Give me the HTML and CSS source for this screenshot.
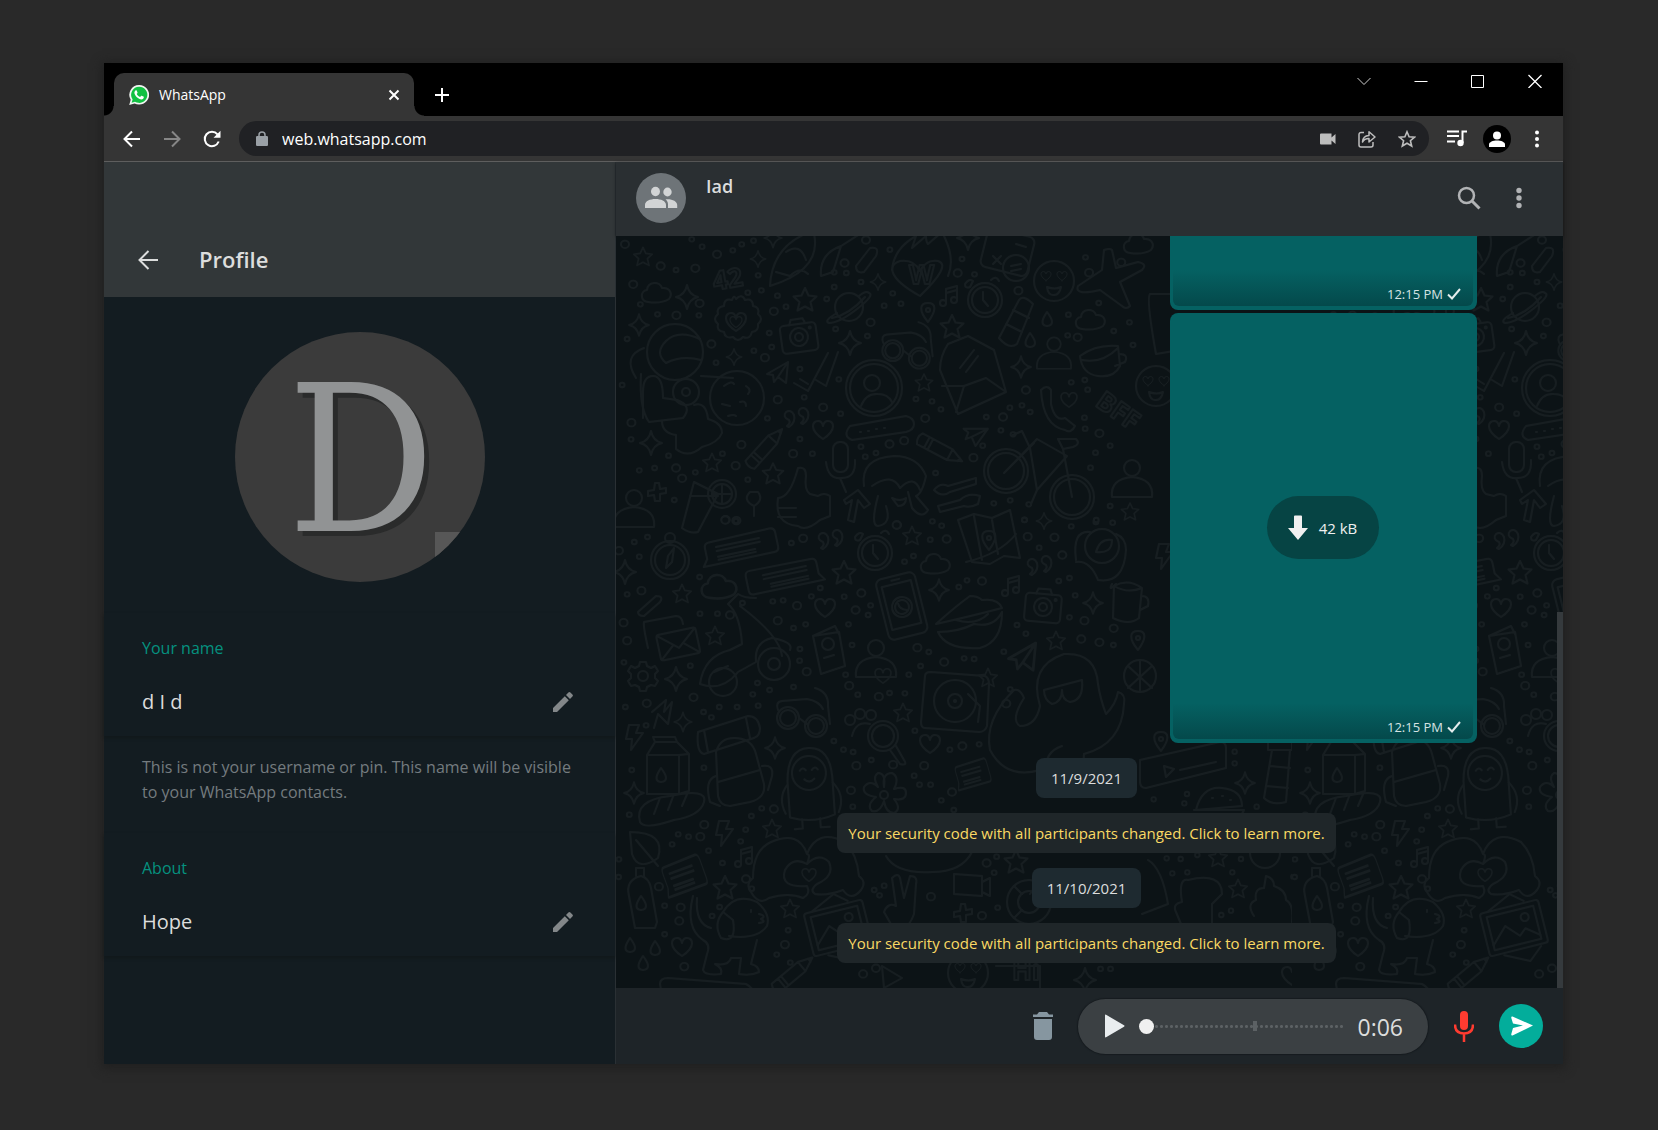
FILE: index.html
```html
<!DOCTYPE html>
<html lang="en">
<head>
<meta charset="utf-8">
<meta name="viewport" content="width=device-width, initial-scale=1">
<title>WhatsApp</title>
<link rel="stylesheet" href="styles.css">
</head>
<body>
<div class="window">
  <header class="tabstrip">
    <div class="tab">
      <svg class="tab-logo" width="20" height="20" viewBox="0 0 20 20"><path d="M10.2 0a9.8 9.8 0 1 1-4.6 18.400L.2 20l1.500-5.200A9.800 9.800 0 0 1 10.200 0z" fill="#f1f5f2"/><path d="M10.200 1.700a8.100 8.100 0 1 1-4.200 15l-3.400 1 1-3.300A8.100 8.100 0 0 1 10.200 1.700z" fill="#12c143"/><path d="M7 5.300c.4 0 .6 0 .8.500l.7 1.700c.1.300 0 .5-.2.700l-.6.800c.8 1.500 1.800 2.400 3.400 3.100l.9-1.100c.2-.2.400-.3.700-.2l1.700.8c.4.200.5.400.4.900-.2 1.300-1.300 1.900-2.400 1.900-2.800-.1-6.800-3.400-7-6.600 0-1 .7-2.400 1.600-2.500z" fill="#fff"/></svg>
      <span class="tab-title">WhatsApp</span>
      <button class="bare" aria-label="Close tab"><svg width="12" height="12" viewBox="0 0 12 12" stroke="#fff" stroke-width="2"><path d="M1.500 1.500l9 9M10.500 1.500l-9 9"/></svg></button>
    </div>
    <button class="bare new-tab" aria-label="New tab"><svg width="16" height="16" viewBox="0 0 16 16" stroke="#fff" stroke-width="2"><path d="M8 1v14M1 8h14"/></svg></button>
    <div class="window-controls">
      <button class="bare" aria-label="Search tabs"><svg width="14" height="14" viewBox="0 0 14 14" fill="none" stroke="#ccc"><path d="M.5 4l6.500 6.500L13.500 4"/></svg></button>
      <button class="bare" aria-label="Minimize"><svg width="14" height="14" viewBox="0 0 14 14" stroke="#fff"><path d="M.5 7.500h13"/></svg></button>
      <button class="bare" aria-label="Maximize"><svg width="14" height="14" viewBox="0 0 14 14" fill="none" stroke="#fff"><path d="M.5 1.500h12v12H.5z"/></svg></button>
      <button class="bare" aria-label="Close"><svg width="14" height="14" viewBox="0 0 14 14" stroke="#fff" stroke-width="1.300"><path d="M.5 1l13 13M13.500 1l-13 13"/></svg></button>
    </div>
  </header>

  <nav class="toolbar">
    <button class="bare" aria-label="Back"><svg width="18" height="18" viewBox="0 0 18 18" fill="none" stroke="#fff" stroke-width="2"><path d="M17 9H2M9 1.500L1.500 9 9 16.500"/></svg></button>
    <button class="bare" aria-label="Forward"><svg width="18" height="18" viewBox="0 0 18 18" fill="none" stroke="#868686" stroke-width="2"><path d="M1 9h15M9 1.500L16.500 9 9 16.500"/></svg></button>
    <button class="bare" aria-label="Reload"><svg width="18" height="18" viewBox="0 0 18 18"><path d="M15.700 11.500A7.200 7.200 0 1 1 14.500 4.300" fill="none" stroke="#fff" stroke-width="2"/><path d="M17.500.8v7h-7z" fill="#fff"/></svg></button>
    <div class="omnibox">
      <svg width="12" height="15" viewBox="0 0 12 15"><path d="M1.500 5h9A1.300 1.300 0 0 1 12 6.300v7a1.300 1.300 0 0 1-1.500 1.700h-9A1.300 1.300 0 0 1 0 13.300v-7A1.300 1.300 0 0 1 1.500 5z" fill="#9aa0a6"/><path d="M3 6V4a3 3 0 0 1 6 0v2" fill="none" stroke="#9aa0a6" stroke-width="1.500"/></svg>
      <input type="text" value="web.whatsapp.com" aria-label="Address">
      <button class="bare" aria-label="Camera"><svg width="16" height="12" viewBox="0 0 16 12" fill="#bdbdbd"><path d="M1 .5h10.500v4L15.500 1v10l-4-3.500v4H1a1 1 0 0 1-1-1v-9a1 1 0 0 1 1-1z"/></svg></button>
      <button class="bare" aria-label="Share"><svg width="18" height="18" viewBox="0 0 18 18" fill="none" stroke="#bdbdbd" stroke-width="1.500"><path d="M6 2.500H3A2 2 0 0 0 1 4.500V15a2 2 0 0 0 2 2h10a2 2 0 0 0 2-2v-3M4.500 12c.3-4.500 3-6.500 6.500-6.600V1.800L17 7l-6 5V8.600C8.200 8.500 6 9.500 4.500 12z" stroke-linejoin="round"/></svg></button>
      <button class="bare" aria-label="Bookmark"><svg width="18" height="18" viewBox="0 0 18 18" fill="none" stroke="#bdbdbd" stroke-width="1.600"><path d="M9 1.800l2.100 5 5.400.4-4.100 3.500 1.300 5.300L9 13.200 4.300 16l1.300-5.300L1.500 7.200l5.400-.4z"/></svg></button>
    </div>
    <button class="bare media" aria-label="Media controls"><svg width="20" height="17" viewBox="0 0 20 17"><path d="M0 1.500h12M0 6h12M0 11.500h8" stroke="#fff" stroke-width="2"/><path d="M15.500 13V1.500H20" fill="none" stroke="#fff" stroke-width="2"/><circle cx="13.500" cy="13" r="3.200" fill="#fff"/></svg></button>
    <button class="bare user" aria-label="You"><svg width="28" height="28" viewBox="0 0 28 28"><circle cx="14" cy="14" r="14"/><circle cx="14" cy="10.500" r="4" fill="#fff"/><path d="M6 22v-2.500c0-2.500 4-4 8-4s8 1.500 8 4V22z" fill="#fff"/></svg></button>
    <button class="bare menu" aria-label="Menu"><svg width="4" height="18" viewBox="0 0 4 18" fill="#fff"><circle cx="2" cy="2.500" r="2"/><circle cx="2" cy="9" r="2"/><circle cx="2" cy="15.500" r="2"/></svg></button>
  </nav>

  <div class="app">
    <aside class="profile">
      <header class="profile-head">
        <button class="bare" aria-label="Back to chats"><svg width="20" height="20" viewBox="0 0 20 20" fill="none" stroke="#dcdddd" stroke-width="2"><path d="M20 10H1.500M10.500 1L1.500 10l9 9"/></svg></button>
        <h1>Profile</h1>
      </header>
      <div class="photo"><span>D</span></div>
      <section class="field">
        <h2>Your name</h2>
        <div class="field-row"><span class="value">d I d</span><button class="bare" aria-label="Edit name"><svg width="20" height="20" viewBox="0 0 20 20" fill="#838789"><path d="M0 16L11.800 4.200l4 4L4 20H0zM13 3l2.400-2.400q1-1 2 0l2 2q1 1 0 2L17 7z"/></svg></button></div>
      </section>
      <p class="note">This is not your username or pin. This name will be visible to your WhatsApp contacts.</p>
      <section class="field">
        <h2>About</h2>
        <div class="field-row"><span class="value">Hope</span><button class="bare" aria-label="Edit about"><svg width="20" height="20" viewBox="0 0 20 20" fill="#838789"><path d="M0 16L11.800 4.200l4 4L4 20H0zM13 3l2.400-2.400q1-1 2 0l2 2q1 1 0 2L17 7z"/></svg></button></div>
      </section>
    </aside>

    <main class="chat">
      <header class="chat-head">
        <svg width="50" height="50" viewBox="0 0 50 50"><circle cx="25" cy="25" r="25" fill="#6e7478"/><g fill="#d2d4d5"><ellipse cx="19.500" cy="18.500" rx="4.500" ry="4.700"/><ellipse cx="31.500" cy="19" rx="4.200" ry="4.400"/><path d="M9 35v-3c0-4 5-6 10.500-6S30 28 30 32v3zM32 35v-3.500c0-2.300-1-4-2.500-5.200 6-.8 11.700 1.700 11.700 5.700v3z"/></g></svg>
        <h2>Iad</h2>
        <button class="bare" aria-label="Search"><svg width="24" height="24" viewBox="0 0 24 24" fill="none" stroke="#b1b3b5"><circle cx="9.500" cy="9.500" r="7.500" stroke-width="2.500"/><path d="M15 15l7.500 7.500" stroke-width="3"/></svg></button>
        <button class="bare" aria-label="Chat menu"><svg width="6" height="22" viewBox="0 0 6 22" fill="#b1b3b5"><circle cx="3" cy="3.500" r="2.700"/><circle cx="3" cy="11" r="2.700"/><circle cx="3" cy="18.500" r="2.700"/></svg></button>
      </header>

      <div class="messages">
        <svg class="doodles" width="100%" height="100%" aria-hidden="true">
          <defs>
            <path id="star" d="M0-12l3.500 7.500 8 1-6 5.500 2 8.500L0 6.500l-7.500 4 2-8.500-6-5.500 8-1z"/>
            <path id="spark" d="M0-12q2 10 11 12q-9 2-11 12q-2-10-11-12q9-2 11-12z"/>
            <path id="heart" d="M0 9C-14 0-11-9-5-9q4 0 5 5q1-5 5-5C11-9 14 0 0 9z"/>
            <path id="cloud" d="M-10 9c-8-1-8-11-1-12c1-9 13-9 15-2c8-1 11 6 7 11q-8 5-21 3z"/>
            <path id="drop" d="M0-7q10 13 0 14q-9-1 0-14z"/>
            <path id="pin" d="M0 10C-10-2-8-9 0-9S9-2 0 10zM-2-2a2 2 0 1 0 4 0a2 2 0 1 0-4 0"/>
            <path id="note" d="M-4 7V-7L7-10V4M-4 7a3 3 0 1 1-3-3l3 1M7 4a3 3 0 1 1-3-3l3 1M-4-3L7-6"/>
            <path id="quotes" d="M-8 9q7-5 5-12q-3-6-8-3q-4 5 3 8q2 3-2 6zM6 6q7-5 5-12Q8-12 3-9q-4 5 3 8q2 3-2 6z"/>
            <path id="plus" d="M-2-9h4l1 6 6-1v5l-6 1v7h-5l-1-6-6 1v-5l6-1z"/>
            <path id="bolt" d="M-5-12H5L2-4h7L-3 13l1-11h-6z"/>
            <path id="plane" d="M-12 2L9-10 7 11-1 5l-4 5-1-7zM-1 5L9-10"/>
            <g id="clock"><circle r="17"/><circle r="13"/><path d="M-2-8v8l5 6M-15-13q-5 2-5-3q4-6 8-3zM6-20q5-5 8 1"/></g>
            <g id="camera"><rect x="-18" y="-13" width="36" height="28" rx="4"/><circle r="9"/><circle r="4"/><path d="M-8-13l2-5H6l2 5"/><circle cx="12" cy="-8" r="1"/></g>
            <g id="planet"><circle r="14"/><path d="M-12 6q-14 8-8 10q10 0 28-14T20-14q-3-3-10 3M-17 11Q0 8 16-10"/></g>
            <g id="pencil"><path d="M-24-6H10L24 0 10 6h-34q-4-6 0-12zM-16-6V6M-12-6V6M10-6V6M20-2v4"/></g>
            <g id="person"><circle cy="-14" r="8"/><path d="M-20 15q-2-18 20-20q22 2 20 20z"/></g>
            <g id="loveface"><circle r="20"/><use href="#heart" transform="translate(-8 -5) scale(.5)"/><use href="#heart" transform="translate(8 -5) scale(.5)"/><path d="M-7 6q8 3 14 0q-2 9-8 8q-5 0-6-8z"/></g>
            <g id="shades"><circle cx="-15" cy="8" r="11"/><circle cx="13" cy="16" r="11"/><circle cx="-15" cy="8" r="8"/><circle cx="13" cy="16" r="8"/><path d="M-25 0q-3-8 4-9l25-2q12 2 16 10M12-22q14 4 13 18l2 18M-4 8l8 6"/></g>
            <g id="speech"><path d="M-30-9q-5 0-5 5V7l-5 7h10H32q5 0 5-5V-5q0-5-5-5zM-24-3h44M-24 1h44M-24 7h38M-24 10h38"/></g>
            <g id="phone"><rect x="-20" y="-32" width="40" height="62" rx="6"/><rect x="-15" y="-24" width="30" height="44"/><circle r="10"/><circle r="7"/><path d="M-3-4q0 6 7 8M-4-28h8"/></g>
            <g id="milk"><path d="M-20-12l8-13h22l12 12v37l-10 3h-32zM-20-12h32L22-13M12-12v39M-12-25l-2-5h22l2 5"/><use href="#drop" x="-6" y="8"/></g>
            <g id="letter"><rect x="-20" y="-12" width="40" height="26" rx="3"/><path d="M-19-11L0 5l19-16M-19 13L-5 1M19 13L5 1"/></g>
            <g id="kid"><path d="M-22 28V-8q2-32 23-32t22 30v38q-22 8-45 0z"/><circle cy="-15" r="17"/><path d="M-9-18q3-4 6 0M3-18q3-4 6 0M-5-9q5 5 10 0M-23-4q-10 12-3 28M23-4q12 14 4 30M-10 31v9h-8M8 31v9h9"/></g>
            <g id="hands"><path d="M0-14Q-8-38-36-26Q-54-18-54 10Q-62 16-56 24Q-48 38-38 30Q-18 24-4 30Q4 26 0 18Q-28 20-22 2Q-14-12 0-4Q4-14 0-14Q10-40 38-26Q50-14 52 8Q60 14 54 22Q44 34 36 22Q20 28 8 26Q2 22 10 16Q28 8 22-6Q12-16 0-4"/><use href="#heart" transform="translate(2 7) scale(.7)"/></g>
            <g id="bike"><circle cx="-33" cy="14" r="22"/><circle cx="-33" cy="14" r="18"/><circle cx="33" cy="40" r="22"/><circle cx="33" cy="40" r="18"/><path d="M-33 14L-2-18l30 17-30 34-7-42-8-17-9 4M33 40L24-8l-5-10h18q5 5-3 8l-10 2M-2 33l-6 14M-35 16L-5-14"/></g>
            <g id="dog"><path d="M-38-34q-8 32 10 44q8 4 4 14l-4 16q2 6 18 4q2-6-6-10q14 2 16-6h10l-2 16q12 2 20-2q0-6-8-8l6-24"/><path d="M-34-32q-2 26 14 30M-8-18q12-20 34-10q14 12 10 24q-10 14-38 10M-8-18q-10 12-2 26q16 6 12-18zM20-20v2M28-16q8 2 2 5q6 3-2 4"/></g>
            <g id="pictures"><rect x="-30" y="-22" width="60" height="44" rx="3"/><rect x="-24" y="-17" width="48" height="34"/><path d="M-24 12L-8-4 4 9l7-6 13 10M-22-22L4-34 16-24M-16 24L8 36 22 24"/><circle cx="13" cy="-8" r="4"/></g>
          </defs>
          <pattern id="wall" width="676" height="760" patternUnits="userSpaceOnUse">
            <rect width="676" height="760" fill="#0c1316"/>
            <g class="ring" transform="translate(-16 -86) scale(.357 .3333)">
              <path id="r1" d="M70 283h0M328 313h0M170 348h0M267 355h0M93 403h0M214 496h0M279 460h0M487 484h0M745 270h0M685 339h0M1002 369h0M1370 368h0M1460 337h0M758 517h0M312 582h0M462 623h0M88 818h0M498 749h0M625 772h0M396 884h0M541 911h0M811 882h0M852 872h0M911 805h0M1193 720h0M1129 801h0M1046 923h0M1399 850h0M213 954h0M230 985h0M380 947h0M352 1109h0M382 1112h0M832 1125h0M1172 422h0M1338 562h0"/>
              <use class="hole" href="#r1"/>
            </g>
            <g class="ring small" transform="translate(-16 -86) scale(.357 .3333)">
              <path id="r2" d="M257 268h0M286 290h0M372 301h0M397 283h0M430 272h0M213 360h0M113 463h0M161 493h0M277 496h0M443 376h0M452 421h0M497 437h0M521 470h0M414 428h0M812 299h0M656 367h0M690 369h0M731 396h0M656 411h0M635 447h0M796 467h0M843 461h0M820 430h0M1014 327h0M1049 373h0M1360 322h0M1397 459h0M1312 494h0M1310 556h0M1439 543h0M1483 517h0M1493 585h0M660 537h0M749 558h0M474 549h0M481 591h0M431 602h0M325 638h0M76 567h0M62 705h0M87 868h0M560 657h0M669 688h0M572 742h0M674 791h0M469 805h0M560 867h0M595 911h0M731 890h0M743 920h0M773 909h0M885 747h0M930 754h0M955 778h0M1148 773h0M1182 766h0M1205 786h0M1082 801h0M1123 841h0M1157 853h0M1072 887h0M940 969h0M1320 697h0M1358 690h0M1366 719h0M1357 803h0M1359 836h0M1429 887h0M1388 908h0M1374 953h0M110 961h0M153 954h0M192 917h0M267 967h0M343 911h0M414 989h0M208 1050h0M1103 1060h0M1149 1051h0M1201 1063h0M1189 1109h0M1389 1116h0M1429 1068h0"/>
              <use class="hole" href="#r2"/>
            </g>
            <g class="ring" transform="translate(-6 264) scale(.357 .3333)">
              <path id="r3" d="M25 152h0M323 60h0M541 115h0M704 279h0M803 75h0M943 117h0M1170 110h0M1245 112h0M1267 165h0M1042 243h0M88 272h0M38 368h0M48 422h0M336 345h0M524 317h0M470 362h0M688 330h0M551 515h0M861 443h0M936 486h0M1329 362h0M1320 417h0M1371 427h0M1411 385h0M1110 611h0M103 610h0M234 592h0M670 557h0M753 590h0M690 797h0M793 794h0M880 797h0M987 738h0M264 974h0M253 1010h0M459 927h0M675 871h0M958 876h0M137 1160h0M381 1137h0M198 1222h0M194 1263h0M208 1400h0M490 1334h0M1055 1089h0M899 1190h0M1042 1247h0M745 1405h0M709 1422h0"/>
              <use class="hole" href="#r3"/>
            </g>
            <g class="ring small" transform="translate(-6 264) scale(.357 .3333)">
              <path id="r4" d="M68 126h0M105 111h0M82 170h0M251 231h0M353 63h0M508 129h0M589 264h0M656 290h0M825 185h0M850 168h0M897 119h0M903 64h0M929 77h0M1202 143h0M1161 60h0M1292 79h0M1362 60h0M1408 68h0M1287 234h0M1257 243h0M1000 241h0M977 261h0M48 283h0M252 341h0M301 341h0M371 309h0M456 304h0M485 301h0M564 289h0M514 384h0M548 373h0M730 316h0M723 345h0M668 373h0M532 447h0M531 482h0M678 435h0M893 456h0M870 498h0M992 475h0M1020 477h0M1140 375h0M1165 401h0M1103 455h0M1303 286h0M1287 352h0M1410 435h0M1121 568h0M39 487h0M225 497h0M43 621h0M262 636h0M284 652h0M306 621h0M356 621h0M400 583h0M415 617h0M447 570h0M413 549h0M514 561h0M660 524h0M694 584h0M783 579h0M826 580h0M837 524h0M854 692h0M627 723h0M654 749h0M681 756h0M732 780h0M952 749h0M1034 733h0M101 676h0M61 810h0M263 803h0M54 944h0M191 1003h0M220 1010h0M174 1033h0M276 1052h0M315 1089h0M366 1024h0M380 989h0M396 948h0M425 925h0M680 920h0M852 827h0M867 854h0M898 854h0M928 901h0M963 930h0M25 1078h0M24 1131h0M397 1166h0M153 1217h0M286 1248h0M307 1221h0M153 1303h0M499 1291h0M467 1364h0M505 1388h0M740 1170h0M768 1157h0M755 1186h0M1086 1223h0M1083 1070h0M1076 1118h0M1374 1407h0M1402 1407h0"/>
              <use class="hole" href="#r4"/>
            </g>
            <g class="ring small" transform="translate(524 504) scale(.3333)">
              <path id="r5" d="M284 35h0M284 70h0M141 162h0M133 190h0M41 178h0M350 200h0M498 90h0M80 355h0M122 357h0M172 345h0M303 357h0M97 400h0M142 397h0M277 397h0M460 410h0M273 512h0M244 525h0"/>
              <use class="hole" href="#r5"/>
            </g>
            <g class="ink">
              <use href="#star" transform="translate(27 21) scale(.8)"/><use href="#star" x="189" y="64"/><use href="#star" x="336" y="91"/><use href="#star" transform="translate(308 147) scale(.75)"/><use href="#star" transform="translate(96 227) scale(.8)"/><use href="#star" transform="translate(157 238) scale(.9)"/><use href="#star" transform="translate(514 276) scale(.75)"/><use href="#star" transform="translate(296 300) scale(.8)"/><use href="#star" x="228" y="337"/><use href="#star" transform="translate(66 358) scale(.8)"/><use href="#star" transform="translate(99 400) scale(.8)"/><use href="#star" transform="translate(440 405) scale(.8)"/><use href="#star" transform="translate(372 442) scale(.8)"/><use href="#star" transform="translate(287 477) scale(.8)"/><use href="#star" transform="translate(156 593) scale(.8)"/><use href="#star" x="109" y="652"/><use href="#star" transform="translate(174 673) scale(.8)"/><use href="#star" x="400" y="626"/><use href="#star" transform="translate(602 622) scale(.8)"/><use href="#star" transform="translate(622 653) scale(.8)"/>
              <use href="#spark" transform="translate(142 23) scale(.7)"/><use href="#spark" x="71" y="61"/><use href="#spark" transform="translate(23 89) scale(.9)"/><use href="#spark" transform="translate(262 46) scale(.7)"/><use href="#spark" x="234" y="107"/><use href="#spark" transform="translate(118 121) scale(.7)"/><use href="#spark" x="35" y="207"/><use href="#spark" transform="translate(405 131) scale(.9)"/><use href="#spark" transform="translate(157 2) scale(.8)"/><use href="#spark" x="352" y="2"/><use href="#spark" x="9" y="336"/><use href="#spark" transform="translate(323 354) scale(.9)"/><use href="#spark" transform="translate(428 285) scale(.7)"/><use href="#spark" transform="translate(477 367) scale(.9)"/><use href="#spark" transform="translate(67 486) scale(.8)"/><use href="#spark" x="60" y="443"/><use href="#spark" transform="translate(159 512) scale(.9)"/><use href="#spark" transform="translate(18 557) scale(.9)"/><use href="#spark" x="469" y="744"/><use href="#spark" transform="translate(629 547) scale(.9)"/>
              <use href="#heart" x="207" y="194"/><use href="#heart" transform="translate(453 164) scale(.8)"/><use href="#heart" x="209" y="372"/><use href="#heart" x="314" y="508"/><use href="#heart" x="66" y="711"/><use href="#heart" x="676" y="740"/>
              <use href="#cloud" x="42" y="57"/><use href="#cloud" x="476" y="84"/><use href="#cloud" x="321" y="328"/><use href="#cloud" transform="translate(105 351) scale(1.200)"/><use href="#cloud" x="524" y="8"/>
              <use href="#drop" x="431" y="83"/><use href="#drop" x="414" y="104"/><use href="#drop" x="14" y="709"/><use href="#drop" x="39" y="712"/><use href="#drop" x="27" y="727"/>
              <use href="#pin" x="312" y="76"/><use href="#pin" x="522" y="404"/><use href="#pin" x="545" y="505"/><use href="#note" x="334" y="60"/><use href="#note" x="129" y="621"/><use href="#note" x="396" y="350"/>
              <use href="#quotes" x="181" y="182"/><use href="#quotes" x="215" y="304"/><use href="#quotes" x="424" y="330"/><use href="#plus" x="41" y="256"/><use href="#plus" x="347" y="677"/>
              <use href="#bolt" x="18" y="501"/><use href="#bolt" x="108" y="597"/><use href="#bolt" x="548" y="320"/>
              <use href="#plane" x="163" y="136"/><use href="#plane" transform="translate(408 420) scale(1.300)"/><use href="#plane" transform="translate(359 197) rotate(30)"/>
              <use href="#clock" x="369" y="64"/><use href="#clock" x="259" y="317"/>
              <use href="#camera" transform="translate(183 101) rotate(-8)"/><use href="#camera" transform="translate(427 371) rotate(5)"/>
              <use href="#planet" x="233" y="71"/>
              <use href="#pencil" transform="translate(150 211) rotate(-48)"/><use href="#pencil" transform="translate(325 214) rotate(28)"/><use href="#pencil" transform="translate(178 737) rotate(-40)"/>
              <use href="#person" x="18" y="276"/><use href="#person" transform="translate(516 246)"/><use href="#person" transform="translate(438 120) scale(.85)"/><use href="#person" transform="translate(260 426)"/><use href="#heart" transform="translate(267 440) scale(.8)"/>
              <use href="#loveface" x="438" y="45"/><use href="#loveface" x="352" y="737"/><use href="#loveface" x="540" y="150"/>
              <use href="#shades" transform="translate(291 107) scale(.95)"/><use href="#shades" x="187" y="474"/>
              <use href="#speech" transform="translate(124 309) rotate(-12)"/><use href="#speech" transform="translate(167 338) rotate(-12) scale(-1 1)"/><use href="#speech" transform="translate(67 637) rotate(-20) scale(.55 1.300)"/><use href="#speech" transform="translate(356 536) rotate(-16) scale(.45 1)"/>
              <use href="#phone" transform="translate(286 371) rotate(-14)"/><use href="#milk" x="51" y="531"/><use href="#letter" transform="translate(62 407) rotate(-12)"/><path d="M32 412q-5-22-4-26l32-6q6 0 7 8"/>
              <use href="#kid" transform="translate(194 552) rotate(-4)"/><use href="#hands" x="191" y="632"/><use href="#bike" transform="translate(423 221)"/><use href="#dog" x="115" y="694"/><use href="#pictures" transform="translate(222 692) rotate(-14)"/>
              <circle cx="258" cy="152" r="28"/><circle cx="258" cy="152" r="24"/><circle cx="256" cy="147" r="8"/><path d="M245 170q5-13 17-12q10 0 14 8"/>
              <circle cx="59" cy="116" r="28"/><path d="M50 127q-12-10 0-22q12-12 34-2M50 127q16-8 35-3M25 138q-2 34 8 48l34-4q10-12-6-18l-14-2q0-22-10-22t-10 16v26M85 140l32 2M46 185q0 12 14 14v14q12 10 26-2q16-4 20-14q0-10-14-14q-2-18-14-14M28 112q-22 8-8 30"/><circle cx="70" cy="156" r="13"/><circle cx="70" cy="156" r="4"/>
              <circle cx="121" cy="162" r="27"/><path d="M108 150q8-6 10-2M130 150q6 4 2 8M106 168l8 2M124 166q6-2 6 4M112 180q6-2 8 0"/>
              <path d="M120 63q6-6 9 1q8-2 8 6q7 1 5 8q6 5 0 10q1 7-6 8q-2 8-9 5q-5 6-10 0q-8 2-9-5q-8-1-6-8q-6-5 0-10q-2-7 6-8q0-8 8-6q2-6 4-1z"/><use href="#heart" x="120" y="86"/><use href="#heart" transform="translate(120 86) scale(.6)"/>
              <path d="M154 50q2-40 40-54l4 2q8 36-44 52zM160 36l14 4q10-10 18-2M170 16q14-10 20 8M205 40q-2-22 20-30l-8 26zM222 12L250-6M240 30l14-18q10-2 6 8l-12 16q-8 2-8-6z"/>
              <path d="M304 60C268 40 274 28 284 25q14-2 20 10q6-12 18-10q14 4-18 35zM276 34q2-22 24-34l-4 12 14-12q0 6 2 8l14-12q14 26 6 44"/>
              <rect x="368" y="-4" width="48" height="40" rx="6" transform="rotate(14 392 14)"/><circle cx="400" cy="32" r="13"/><path d="M377 20l8 8M385 20l-8 8M395 30l10-2M395 35l10-2M400 8l10 3"/>
              <path d="M484 54q-26 6-22-4l24-16 2-20q6-2 8 0l4 18 22-6q10 2 4 8l-22 12 10 24q-4 4-8 0zM476-4q20 8 30-10M535 58h30M534 58q-4 4 6 60l24-4M570 60"/>
              <path d="M383 102l20-38q4-6 14 4l-16 40q-8 6-18-6zM390 88l16 8M397 74l16 8M324 134q0-14 8-26l20-8 26 14 12 42-48 22zM326 150h22l22-8 20 14M348 150l-8 26M344 132l14-18M350 136l12-16"/>
              <path d="M178 147l14 8 20-38M184 143l8 5M200 144l10 6 12-34M464 120q16-12 38-10l2 20q-6 12-22 10q-16-2-18-20zM503 118q10 0 6 8l-10 4M466 124q20 4 36-12"/>
              <path d="M425 154q6-6 10 0v14q4 18 14 14l10 8q-4 8-10 4q-22-4-24-40zM234 190l56-10q8 2 8 8q0 6-8 8l-54 8q-10-4-2-14zM244 196h1M252 195h1M260 193h1M268 192h1"/>
              <rect x="217" y="206" width="15" height="30" rx="7"/><path d="M210 226q2 18 16 16q14 0 13-18M224 242l6 14M248 250q-4-28 30-30q24 0 32 20q-4 18-10 20l12 14q-6 10-16-2l-4-16M256 250q20-14 28 2q14-14 20 2M262 260q-8 30 0 30q14-2 8-20M276 262q8 4 14 0q0 8-8 8z"/>
              <path d="M78 246l-12 46q8 6 16 4l20-38zM74 260h28"/><circle cx="106" cy="258" r="14"/><circle cx="106" cy="258" r="10"/><path d="M106 248v20M96 258h20M134 256q-8 8 4 14q10-6 4-14zM138 270v10"/>
              <path d="M162 262q12 0 20-30q8-2 8 8q-2 14 4 18l8 2q6-4 12 0v20l-10 4q-14 12-22 6q-24-2-20-28zM162 272h18M162 281h18M228 264l14-10 12 14-6 4-6-8-4 22-6-2 4-20-6 4zM318 254q6-8 14-4l28-8v6l-26 8q-8 6-16-2zM322 270l22-6q8-8 20-4l-2 8q-8 4-14 2l-24 6z"/>
              <circle cx="54" cy="324" r="19"/><circle cx="54" cy="324" r="15"/><circle cx="54" cy="302" r="5"/><path d="M50 332l2-12 6-8-2 14z"/>
              <path d="M342 284l16-6 18 4 18-8 10 48-16-2-14 8-18-2zM350 326q34-8 50-28M358 280l8 44M376 284l6 34"/><use href="#pin" x="373" y="304"/>
              <circle cx="486" cy="310" r="17"/><path d="M460 324q-4-30 14-28M460 326q14-2 22 18q26 4 28-30q0-12-10-16M480 316q4-14 16-12q0 14-16 12M496 348q-4 8 4 0M22 376l18-16q8 0 4 6l-16 14q-6 0-6-4z"/>
              <path d="M320 388q20-18 34-28q8 0 12 4q16-2 20 8q-30 8-66 16zM322 396q20 0 36-8q20 4 28-12q0 30-22 36q-34 2-42-16zM340 384q20 6 32-6"/>
              <path d="M498 350q14-8 28 2l-3 30q-10 8-26 0zM526 360q8 0 6 10l-8 4M498 350q14 8 28 2"/>
              <path d="M84 448q4-28 30-34l12-6q-2-30-14-40l10-10q6 4 18 4M84 448q22 8 38-12l18-10q-2-20 16-24q22 4 18 12M124 370q40 30 42 50"/><circle cx="158" cy="428" r="16"/><circle cx="107" cy="446" r="14"/><circle cx="158" cy="428" r="6"/><path d="M98 436l14-6"/>
              <path d="M197 400l22-10 4 8M197 400l26-4 6 34-24 8z"/><circle cx="212" cy="408" r="6"/><path d="M208 422l10-3M309 440q0-4 6-4l54 4q4 2 4 8l-2 42q-2 6-8 6l-54-4q-4 0-4-6z"/><circle cx="339" cy="465" r="21"/><circle cx="339" cy="465" r="7"/><circle cx="339" cy="465" r="1"/><path d="M352 458l12 12-2 16"/>
              <path d="M24 426h6l1 4 4 2 4-2 3 5-3 3v4l3 3-3 5-4-1-4 2-1 4h-6l-1-4-4-2-4 1-3-5 3-3v-4l-3-3 3-5 4 2 4-2z"/><circle cx="27" cy="440" r="5"/><circle cx="524" cy="440" r="16"/><path d="M512 430l24 22M536 430l-24 22M524 424v32M36 476l14-12-2 12 8-10-4 22-10-10-4 14"/>
              <path d="M424 470q-12-40 24-52q32-2 34 30q2 14 8 30q10-10 12-22q8 2 6 12q-2 40-40 50q0 18-18 14M424 470q-4 20-20 20q-10-6 4-28q-4-10-10-8q-30 30-24 60q16 30 50 20M428 454l38-10q2 20-12 22q-8-2-8-12q0 12-10 14q-8-4-8-14M446 510q-18 6-16 26"/>
              <circle cx="267" cy="500" r="15"/><circle cx="267" cy="500" r="11"/><path d="M274 514l10 14q8 2 4-4l-8-14"/><circle cx="234" cy="484" r="5"/><circle cx="244" cy="478" r="5"/><circle cx="255" cy="479" r="5"/><path d="M236 500q4-16 18-12"/>
              <path d="M82 496l50-16q10 0 12 12q0 8-6 10l-50 16q-8-2-6-22zM88 494l4 22M130 482l4 20M100 516q4-14 18-14q18 0 22 16l8 30q2 14-14 18l-20 4q-10 0-12-10zM102 546l42-12M100 540q-12 4-6 26l10 4M146 530q12-2 10 10l-4 14"/>
              <path d="M268 551q-2-14 8-14q8 4 2 16q12-4 12 4q0 8-12 6q8 10 0 14q-8 0-10-12q-4 12-12 10q-6-6 4-14q-14-2-12-10q6-8 14 0q-6-10 0-14q8 0 6 14z"/><circle cx="268" cy="559" r="4"/>
              <path d="M24 586q-6-22 30-26q38-8 34 6q-4 14-30 18q-30 10-34 2zM38 578l6-16M52 574l6-16M66 570l6-14M14 596q36 0 28 26q-20 14-26-4zM20 604l22 26M25 640q-16 4-12 20l6 32h20l2-6-6-34q-2-10-10-12zM20 640v-8h8v8"/><use href="#drop" x="25" y="667"/>
              <path d="M268 676q4-10 12-6l-4-28q6-6 8 0l4 20 6-22q8 0 6 8l-2 30q-8 22-22 12zM338 638l28 2v20l-28-2zM366 646l8-4v18l-8-4"/><circle cx="413" cy="666" r="22"/><circle cx="413" cy="666" r="11"/><path d="M398 650l8 8M420 650l-6 8M398 682l8-8M270 620q10 18 46 16q30 0 40-20"/>
              <path d="M524 524l80-18q6 0 6 6v20l-80 20q-6 0-6-6zM548 530l10 3-8 8zM564 534l36-8M580 574q6-24 26-22q20 2 20 18zM578 574h50l-4 8h-42M596 562h1M606 560h1M614 564h1M656 514l-8 48q8 8 22 4l4-52zM652 514h24v-8h-24zM654 530l20 2M650 550l22 2"/>
              <path d="M532 624q14 8 20 44l-26 10M560 676q-4-8 6-10q-4-24 6-22q34-8 34 14l-10 10v32h-26zM638 680q-8-12 2-16q-2-12 8-12l2-12q8 2 8 10q12 4 12 14q8 4 6 22M632 690h40"/><circle cx="649" cy="617" r="15"/><path d="M46 760l-2-12q0-6 8-6l78 6q8 4 8 12M266 730l20 12-18 10zM380 730h44v30"/>
            </g>
            <g class="ink words"><text x="96" y="52" transform="rotate(-10 112 39)">42</text><text x="293" y="48">W</text><text x="478" y="184" transform="rotate(35 502 177)">BFF</text><text x="396" y="744">Hi</text></g>
          </pattern>
          <rect width="100%" height="100%" fill="url(#wall)"/>
        </svg>
        <div class="thread">
          <article class="bubble cut"><div class="media-box"></div><div class="stamp"><time>12:15 PM</time><svg width="14" height="12" viewBox="0 0 14 12" fill="none" stroke="#e4eded" stroke-width="2"><path d="M1 6.500l4 4L13 1"/></svg></div></article>
          <article class="bubble">
            <div class="media-box"><button class="download"><svg width="20" height="25" viewBox="0 0 20 25" fill="#f0f0f0"><path d="M7 .5h6q1 0 1 1V13h6L10 25 0 13h6V1.500q0-1 1-1z"/></svg>42 kB</button></div>
            <div class="stamp"><time>12:15 PM</time><svg width="14" height="12" viewBox="0 0 14 12" fill="none" stroke="#e4eded" stroke-width="2"><path d="M1 6.500l4 4L13 1"/></svg></div>
          </article>
          <span class="chip">11/9/2021</span>
          <button class="chip security">Your security code with all participants changed. Click to learn more.</button>
          <span class="chip">11/10/2021</span>
          <button class="chip security">Your security code with all participants changed. Click to learn more.</button>
        </div>
        <div class="scrollbar"></div>
      </div>

      <footer class="recorder">
        <button class="bare" aria-label="Delete recording"><svg width="20" height="28" viewBox="0 0 20 28" fill="#8696a0"><path d="M6 0h8l2 2.500h4V5H0V2.500h4zM1 7h18v18q0 3-3 3H4q-3 0-3-3z"/></svg></button>
        <div class="player">
          <button class="bare" aria-label="Play"><svg width="20" height="24" viewBox="0 0 20 24" fill="#e9edef"><path d="M0 1.500Q0 0 1.500 1L19 11.300q1 .7 0 1.400L1.500 23Q0 24 0 22.500z"/></svg></button>
          <input type="range" min="0" max="6" value="0" aria-label="Position">
          <span class="time">0:06</span>
        </div>
        <button class="bare mic" aria-label="Recording"><svg width="20" height="31" viewBox="0 0 20 31"><rect x="6" y="0" width="8" height="19" rx="4" fill="#ff3b30"/><path d="M1 13.500q0 9 9 9t9-9M10 23v8" fill="none" stroke="#ff3b30" stroke-width="2.500"/></svg></button>
        <button class="send" aria-label="Send"><svg width="22" height="20" viewBox="0 0 22 20" fill="#fff"><path d="M1.500.5L22 9.500 1.500 19.500Q0 20 .3 18L2 12l10-2.500L2 7.500.3 2Q0 0 1.500.5z"/></svg></button>
      </footer>
    </main>
  </div>
</div>
</body>
</html>
```
FILE: styles.css
```css
* { box-sizing: border-box; }

body {
  margin: 0;
  min-height: 100vh;
  padding: 63px 95px 66px 104px;
  display: flex;
  background: #292929;
  color: #dcdddd;
  font-family: "Open Sans", "Noto Sans", sans-serif;
}

h1, h2, p { margin: 0; }

button { font: inherit; color: inherit; cursor: pointer; }

svg { display: block; }

.bare { padding: 0; border: 0; background: none; }

.window {
  flex: 1;
  min-width: 0;
  display: flex;
  flex-direction: column;
  box-shadow: 0 2px 10px 2px #1f1f1f;
}

/* Browser frame */

.tabstrip {
  height: 53px;
  padding: 10px 21px 0 10px;
  display: flex;
  align-items: flex-start;
  background: #000;
}

.tab {
  position: relative;
  width: 300px;
  height: 43px;
  padding: 0 14px 0 15px;
  display: flex;
  align-items: center;
  gap: 10px;
  border-radius: 10px 10px 0 0;
  background: #353535;
  color: #fff;
  font-size: 14px;
}

.tab::before,
.tab::after {
  content: "";
  position: absolute;
  bottom: 0;
  width: 10px;
  height: 10px;
}

.tab::before { right: 100%; background: radial-gradient(circle at 0 0, transparent 9px, #353535 10px); }
.tab::after { left: 100%; background: radial-gradient(circle at 100% 0, transparent 9px, #353535 10px); }

.tab-title { flex: 1; }

.new-tab { margin: 14px 0 0 20px; }

.window-controls {
  margin-left: auto;
  padding-top: 1px;
  display: flex;
  gap: 43px;
}

.toolbar {
  height: 46px;
  padding: 0 24px 0 19px;
  display: flex;
  align-items: center;
  gap: 22px;
  border-bottom: 1px solid #5e5e5e;
  background: #353535;
}

.omnibox {
  flex: 1;
  height: 35px;
  margin-left: -4px;
  padding: 0 13px 0 17px;
  display: flex;
  align-items: center;
  gap: 22px;
  border-radius: 18px;
  background: #202124;
}

.omnibox input {
  flex: 1;
  min-width: 0;
  margin-left: -8px;
  padding: 0;
  border: 0;
  outline: 0;
  background: none;
  color: #fff;
  font: 16px/24px "Open Sans", "Noto Sans", sans-serif;
}

.media { margin-left: -4px; }
.user { margin-left: -6px; }
.menu { margin-left: 2px; }

/* App */

.app {
  flex: 1;
  display: grid;
  grid-template-columns: 512px 1fr;
}

.profile {
  border-right: 1px solid #2a3034;
  background: #131c21;
}

.profile-head {
  height: 135px;
  padding: 0 34px 25px;
  display: flex;
  align-items: flex-end;
  gap: 41px;
  background: #323739;
}

.profile-head .bare { padding-bottom: 2px; }

.profile-head h1 {
  font-size: 22px;
  line-height: 26px;
  font-weight: 600;
}

.photo {
  position: relative;
  width: 250px;
  height: 250px;
  margin: 35px auto 31px;
  display: flex;
  align-items: center;
  justify-content: center;
  border-radius: 50%;
  overflow: hidden;
  background: #3b3b3b;
  color: #919394;
  font: 204px/250px "DejaVu Serif Condensed", "DejaVu Serif", serif;
  text-shadow: 5px 5px 0 #2a2b2b;
}

.photo span { padding: 8px 0 0 3px; }

.photo::after {
  content: "";
  position: absolute;
  right: 0;
  bottom: 0;
  width: 50px;
  height: 50px;
  background: #575757;
}

.field {
  padding: 22px 42px 4px 38px;
  box-shadow: 0 2px 3px rgba(17, 24, 25, 0.8);
}

.field h2 {
  color: #05917f;
  font-size: 16px;
  line-height: 26px;
  font-weight: 400;
}

.field-row {
  min-height: 60px;
  margin-top: 11px;
  display: flex;
  align-items: center;
  justify-content: space-between;
}

.value { font-size: 20px; line-height: 28px; }

.note {
  padding: 19px 28px 28px 38px;
  color: #747b7f;
  font-size: 16px;
  line-height: 25px;
}

.chat {
  min-width: 0;
  display: flex;
  flex-direction: column;
}

.chat-head {
  position: relative;
  height: 74px;
  padding: 0 41px 2px 20px;
  display: flex;
  align-items: center;
  gap: 20px;
  background: #2a2f32;
  box-shadow: 0 1px 3px rgba(0, 0, 0, 0.5);
}

.chat-head h2 {
  flex: 1;
  align-self: flex-start;
  padding-top: 11px;
  font-size: 18px;
  line-height: 26px;
  font-weight: 600;
}

.chat-head .bare:last-child { margin-left: 15px; }

.messages {
  position: relative;
  flex: 1;
  display: flex;
  align-items: flex-end;
  overflow: hidden;
}

.doodles { position: absolute; inset: 0; }

.ink { fill: none; stroke: #171e21; stroke-width: 2; stroke-linejoin: round; stroke-linecap: round; }

.ring { fill: none; stroke-linecap: round; stroke: #171e21; stroke-width: 28px; }
.ring.small { stroke-width: 19px; }
.ring .hole { stroke: #0c1316; stroke-width: 17px; }
.ring.small .hole { stroke-width: 8px; }

.words { font: 700 26px "Open Sans", sans-serif; }

.thread {
  position: relative;
  flex: 1;
  height: 752px;
  padding: 0 6px 25px 0;
  display: flex;
  flex-direction: column;
  justify-content: flex-end;
  align-items: center;
  gap: 15px;
}

.bubble {
  flex: none;
  position: relative;
  align-self: flex-end;
  width: 307px;
  height: 430px;
  margin-right: 80px;
  padding: 3px 4px 4px 3px;
  display: grid;
  border-radius: 8px;
  background: #056162;
}

.bubble.cut { margin-bottom: -12px; }

.media-box {
  grid-area: 1 / 1;
  display: flex;
  align-items: center;
  justify-content: center;
  border-radius: 6px;
  background: linear-gradient(to top, #04494b, #056162 36px);
}

.download {
  height: 63px;
  padding: 0 22px 0 21px;
  display: flex;
  align-items: center;
  gap: 11px;
  border: 0;
  border-radius: 32px;
  background: #064444;
  color: #f0f0f0;
  font-size: 15px;
}

.stamp {
  grid-area: 1 / 1;
  align-self: end;
  justify-self: end;
  padding: 0 12px 2px 0;
  display: flex;
  align-items: center;
  gap: 4px;
  color: #d5e3e3;
  font-size: 13px;
  line-height: 20px;
}

.chip {
  flex: none;
  height: 40px;
  padding: 0 15px;
  border: 0;
  border-radius: 8px;
  background: #1e2a30;
  color: #dcdddd;
  font-size: 15px;
  line-height: 40px;
}

.security { padding: 0 11px; background: #1f2629; color: #fad964; }

.scrollbar {
  position: absolute;
  right: 0;
  bottom: 0;
  width: 6px;
  height: 50%;
  background: #353a3d;
}

.recorder {
  height: 76px;
  padding: 0 20px;
  display: flex;
  align-items: center;
  justify-content: flex-end;
  gap: 25px;
  background: #1e2428;
}

.player {
  width: 350px;
  height: 55px;
  padding: 0 25px 0 27px;
  display: flex;
  align-items: center;
  gap: 14px;
  border-radius: 28px;
  background: #3b4043;
  box-shadow: 0 0 1px 1px #161b1f;
}

.player input {
  flex: 1;
  min-width: 0;
  height: 16px;
  margin: 0;
  appearance: none;
  background:
    linear-gradient(#5c6164, #5c6164) 57% 50% / 4px 10px no-repeat,
    radial-gradient(circle, #5c6164 1px, transparent 2px) 0 50% / 5px 5px repeat-x;
}

.player input::-webkit-slider-thumb {
  appearance: none;
  width: 15px;
  height: 15px;
  border-radius: 50%;
  background: #f0f0f0;
}

.time { padding-top: 2px; font-size: 23px; line-height: 30px; }

.mic { margin-left: 1px; }

.send {
  width: 44px;
  height: 44px;
  padding: 0 0 0 1px;
  display: flex;
  align-items: center;
  justify-content: center;
  border: 0;
  border-radius: 50%;
  background: #03ad9b;
}
```
